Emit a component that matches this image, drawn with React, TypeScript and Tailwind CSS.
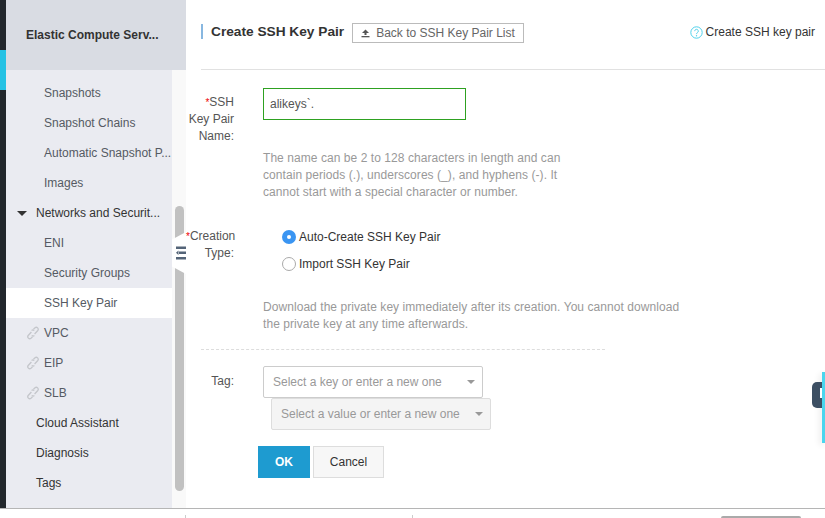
import React from 'react';

const font = { fontFamily: '"Liberation Sans", Arial, sans-serif' };

const LinkIcon = () => (
  <svg width="12" height="14" viewBox="0 0 12 14" fill="none" stroke="#c4c6cb" strokeWidth="1.3" className="shrink-0">
    <path d="M6.5 3.2 L8 1.7 a2 2 0 0 1 2.8 2.8 L7.6 8" />
    <path d="M5.5 10.8 L4 12.3 a2 2 0 0 1 -2.8 -2.8 L4.4 6" />
    <path d="M4.6 4.4 a2 2 0 0 1 2.6 0.2" />
    <path d="M7.4 9.6 a2 2 0 0 1 -2.6 -0.2" />
  </svg>
);

const Caret = () => (
  <span className="w-0 h-0 border-x-[4px] border-x-transparent border-t-[4px] border-t-[#999]" />
);

const Row = ({ children, className = '' }: { children: React.ReactNode; className?: string }) => (
  <div className={`h-[30px] flex items-center whitespace-nowrap ${className}`}>{children}</div>
);

const SubItem = ({ label, active }: { label: string; active?: boolean }) => (
  <Row className={`pl-[38px] text-[#555a63] ${active ? 'bg-white' : ''}`}>{label}</Row>
);

const LinkItem = ({ label }: { label: string }) => (
  <Row className="pl-[21px] gap-[5px] text-[#555a63]">
    <LinkIcon />
    {label}
  </Row>
);

const Sidebar = () => (
  <div className="w-[180px] shrink-0 flex flex-col relative">
    <div className="h-[70px] shrink-0 bg-[#d9dce3] flex items-center pl-[20px] text-[12px] font-bold text-[#333]">
      Elastic Compute Serv...
    </div>
    <div className="flex-1 flex min-h-0">
      <div className="w-[166px] bg-[#eaebf1] pt-[8px] text-[12px]">
        <SubItem label="Snapshots" />
        <SubItem label="Snapshot Chains" />
        <SubItem label="Automatic Snapshot P..." />
        <SubItem label="Images" />
        <Row className="pl-[11px] gap-[9px] text-[#333]">
          <span className="w-0 h-0 border-x-[5px] border-x-transparent border-t-[5px] border-t-[#333]" />
          Networks and Securit...
        </Row>
        <SubItem label="ENI" />
        <SubItem label="Security Groups" />
        <SubItem label="SSH Key Pair" active />
        <LinkItem label="VPC" />
        <LinkItem label="EIP" />
        <LinkItem label="SLB" />
        <Row className="pl-[30px] text-[#333]">Cloud Assistant</Row>
        <Row className="pl-[30px] text-[#333]">Diagnosis</Row>
        <Row className="pl-[30px] text-[#333]">Tags</Row>
      </div>
      <div className="w-[14px] bg-[#f9f9f9] pt-[136px] pl-[3px]">
        <div className="w-[9px] h-[285px] rounded-[5px] bg-[#c1c1c1]" />
      </div>
    </div>
    {/* collapse handle over the scrollbar */}
    <div className="absolute left-[166px] top-[232px] w-[14px] h-[42px] bg-white flex items-center justify-end [clip-path:polygon(0_18%,100%_0,100%_100%,0_82%)]">
      <svg width="10" height="14" viewBox="0 0 10 14" fill="#546478">
        <rect x="0" y="0.5" width="10" height="2.5" />
        <rect x="3" y="5.5" width="7" height="2.5" />
        <rect x="0" y="11" width="10" height="2.5" />
        <path d="M2.5 4.5 L0 6.8 L2.5 9 Z" />
      </svg>
    </div>
  </div>
);

const Label = ({ children, required }: { children: React.ReactNode; required?: boolean }) => (
  <div className="text-right text-[12px] leading-[17px] text-[#555]">
    {required && <span className="text-[#e00] text-[10px]">*</span>}
    {children}
  </div>
);

const Content = () => (
  <div className="flex-1 min-w-0 pl-[15px] text-[12px] text-[#333] relative">
    <div className="h-[70px] border-b border-[#e1e1e1] flex items-start pt-[22px]">
      <div className="mt-[2px] w-[2px] h-[15px] bg-[#88b7e0]" />
      <h1 className="ml-[8px] text-[13.7px] font-bold leading-[20px] text-[#333] w-[133px] whitespace-nowrap">
        Create SSH Key Pair
      </h1>
      <button className="ml-[8px] mt-[1px] h-[20px] w-[172px] border border-[#bbb] flex items-center justify-center gap-[6px] text-[#666] text-[12px]">
        <svg width="9" height="9" viewBox="0 0 9 9" fill="#555">
          <path d="M4.5 0.5 L8 4 H1 Z" />
          <rect x="3.5" y="4" width="2" height="2" />
          <rect x="0.5" y="7" width="8" height="1.3" />
        </svg>
        Back to SSH Key Pair List
      </button>
      <div className="ml-auto pr-[10px] flex items-center gap-[3px] h-[20px] text-[#333]">
        <svg width="13" height="13" viewBox="0 0 13 13" fill="none">
          <circle cx="6.5" cy="6.5" r="5.7" stroke="#4fd0ea" strokeWidth="1" />
          <path d="M4.7 5.1 a1.8 1.8 0 1 1 2.7 1.6 c-0.6 0.3 -0.9 0.7 -0.9 1.4" stroke="#4fd0ea" strokeWidth="1" />
          <circle cx="6.5" cy="9.8" r="0.7" fill="#4fd0ea" />
        </svg>
        Create SSH key pair
      </div>
    </div>

    <div className="flex pt-[18px]">
      <div className="w-[48px] shrink-0 -ml-[15px] pt-[6px]">
        <Label required>SSH Key Pair Name:</Label>
      </div>
      <div className="ml-[29px]">
        <div className="w-[203px] h-[32px] border border-[#2ea121] flex items-center pl-[6px] text-[#555]">
          alikeys`.
        </div>
        <p className="mt-[30px] w-[310px] leading-[17px] tracking-[0.06px] text-[#999]">
          The name can be 2 to 128 characters in length and can contain periods (.), underscores (_), and hyphens (-). It cannot start with a special character or number.
        </p>
      </div>
    </div>

    <div className="flex pt-[28px]">
      <div className="shrink-0 w-[48px] -ml-[15px] -mt-[1px]">
        <Label required>Creation Type:</Label>
      </div>
      <div className="ml-[48px] flex flex-col gap-[11px]">
        <div className="flex items-center gap-[3px] h-[16px] text-[#333]">
          <span className="w-[14px] h-[14px] rounded-full bg-[#3a95f2] flex items-center justify-center">
            <span className="w-[4px] h-[4px] rounded-full bg-white" />
          </span>
          Auto-Create SSH Key Pair
        </div>
        <div className="flex items-center gap-[3px] h-[16px] text-[#333]">
          <span className="w-[14px] h-[14px] rounded-full border border-[#aaa] bg-white" />
          Import SSH Key Pair
        </div>
      </div>
    </div>

    <p className="mt-[27px] ml-[62px] w-[430px] leading-[17px] tracking-[0.06px] text-[#999]">
      Download the private key immediately after its creation. You cannot download the private key at any time afterwards.
    </p>

    <div className="mt-[16px] w-[404px] border-t border-dashed border-[#ddd]" />

    <div className="flex pt-[16px]">
      <div className="w-[48px] shrink-0 -ml-[15px] pt-[7px]">
        <Label>Tag:</Label>
      </div>
      <div className="ml-[29px]">
        <div className="w-[220px] h-[32px] border border-[#ccc] rounded-[2px] flex items-center justify-between pl-[9px] pr-[7px] text-[#999]">
          Select a key or enter a new one
          <Caret />
        </div>
        <div className="ml-[8px] w-[220px] h-[32px] border border-[#ddd] rounded-[2px] bg-[#f4f4f4] flex items-center justify-between pl-[9px] pr-[7px] text-[#999]">
          Select a value or enter a new one
          <Caret />
        </div>
      </div>
    </div>

    <div className="flex gap-[3px] ml-[57px] mt-[16px]">
      <button className="w-[52px] h-[32px] bg-[#1e9bd0] text-white font-bold text-[12px]">OK</button>
      <button className="w-[71px] h-[32px] border border-[#ddd] bg-[#f7f7f7] text-[#333] text-[12px]">Cancel</button>
    </div>

    {/* floating feedback widget on the right edge */}
    <div className="absolute right-0 top-[372px] w-[3px] h-[71px] bg-[#4ad6ee] shadow-[-2px_2px_6px_rgba(0,0,0,0.12)]" />
    <div className="absolute right-[3px] top-[382px] w-[10px] h-[26px] bg-[#3d4f63] rounded-l-[5px]">
      <div className="absolute right-0 top-[6px] w-[2px] h-[10px] bg-white" />
    </div>
  </div>
);

export default function App() {
  return (
    <div className="w-[825px] h-[518px] overflow-hidden bg-white flex flex-col" style={font}>
      <div className="h-[508px] flex shrink-0">
        <div className="w-[6px] shrink-0 bg-[#22272c] pt-[50px]">
          <div className="h-[40px] bg-[#25c2e4]" />
        </div>
        <Sidebar />
        <Content />
      </div>
      <div className="h-[1px] shrink-0 bg-[#b5b5b5]" />
      <div className="flex-1 relative">
        <div className="absolute left-[185px] top-[6px] w-px h-[3px] bg-[#ccc]" />
        <div className="absolute left-[412px] top-[6px] w-px h-[3px] bg-[#ccc]" />
        <div className="absolute left-[721px] top-[7px] w-[80px] h-[2px] rounded-t bg-[#aaa]" />
      </div>
    </div>
  );
}
